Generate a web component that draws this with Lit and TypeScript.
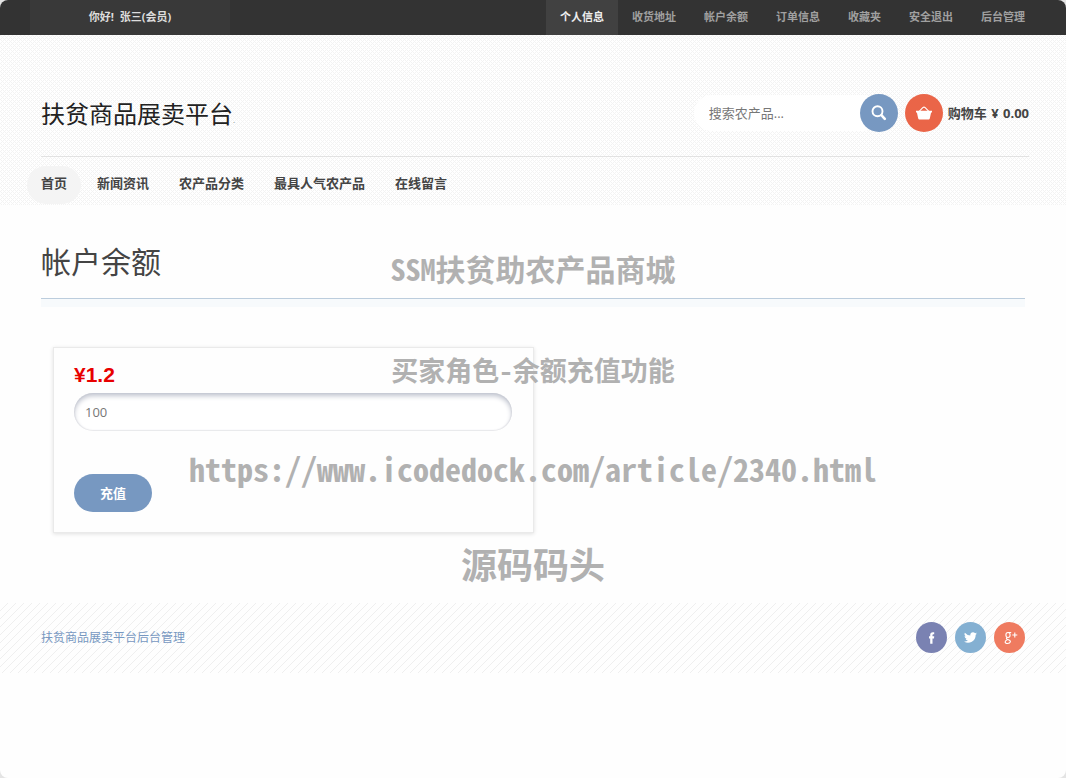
import { LitElement, html, css, svg } from "lit";
import { customElement, state } from "lit/decorators.js";

const accountLinks = ["个人信息", "收货地址", "帐户余额", "订单信息", "收藏夹", "安全退出", "后台管理"];
const mainLinks = ["首页", "新闻资讯", "农产品分类", "最具人气农产品", "在线留言"];

const searchIcon = svg`<svg viewBox="0 0 16 16" width="16" height="16" aria-hidden="true">
  <circle cx="6.5" cy="6.3" r="5" fill="none" stroke="#fff" stroke-width="1.9"/>
  <path d="M10.400 10.200l3.400 3.600" stroke="#fff" stroke-width="2.600" stroke-linecap="round"/></svg>`;

const basketIcon = svg`<svg viewBox="0 0 16 14" width="16" height="14" aria-hidden="true">
  <path d="M3.200 5.400L6.800 1.600Q8 .7 9.200 1.600L12.800 5.400" fill="none" stroke="#fff" stroke-width="1.1"/>
  <path d="M0 4.800h16v1.700h-.9L13.900 12c-.2 1-.8 1.500-1.700 1.500H3.800c-.9 0-1.500-.5-1.700-1.500L.9 6.500H0z" fill="#fff"/></svg>`;

const facebookIcon = svg`<svg viewBox="0 0 16 16" width="16" height="16" aria-hidden="true">
  <path d="M6.200 13.700V8.500H5V6.300h1.200V4.900c0-1.800 1-2.700 2.600-2.700h1.400v2.100h-.9c-.6 0-.8.3-.8.8v1.200h1.700L10 8.500H8.500v5.200z" fill="#fff"/></svg>`;

const twitterIcon = svg`<svg viewBox="0 0 24 24" width="13" height="13" aria-hidden="true">
  <path fill="#fff" d="M24 4.600a10 10 0 0 1-2.800.8 5 5 0 0 0 2.100-2.700 10 10 0 0 1-3.100 1.200 4.900 4.900 0 0 0-8.400 4.500A14 14 0 0 1 1.700 3.200a4.900 4.900 0 0 0 1.500 6.500 5 5 0 0 1-2.200-.6 4.900 4.900 0 0 0 3.900 4.900 5 5 0 0 1-2.200.1 4.900 4.900 0 0 0 4.600 3.400A9.900 9.900 0 0 1 0 19.500a14 14 0 0 0 21.500-12.400A10 10 0 0 0 24 4.600z"/></svg>`;

const googleIcon = svg`<svg viewBox="0 0 16 16" width="16" height="16" aria-hidden="true">
  <g fill="none" stroke="#fff" stroke-width="1.100">
  <ellipse cx="6" cy="5" rx="2.100" ry="2.500"/>
  <path d="M9.200 2.500H6M5 7.400C3.600 8.600 4.800 9.200 6.400 9.700c3.200 1 2.200 3.800-.8 3.800-3.200 0-3.300-2.800-.2-3.800"/>
  <path d="M12.800 2.500v5M10.300 5h5"/></g></svg>`;

@customElement("app-root")
export class AppRoot extends LitElement {
  @state() private activeAccount = 0;

  static styles = css`
    :host {
      display: block;
      min-height: 100vh;
      background: #e4e4e4;
      color: #444;
      font: 13px/20px "Open Sans", "Noto Sans CJK SC", sans-serif;
    }
    * { box-sizing: border-box; }
    a { color: inherit; text-decoration: none; }
    svg { display: block; }
    .page {
      position: relative;
      min-height: 100vh;
      background: #fefefe;
      border-radius: 8px;
      overflow: hidden;
    }
    .topbar {
      display: flex;
      justify-content: space-between;
      padding: 0 27px 0 30px;
      background: #333;
      color: #a0a0a0;
      font-size: 11px;
      font-weight: bold;
      line-height: 33px;
    }
    .greeting { width: 200px; padding-bottom: 2px; background: #393939; color: #ddd; text-align: center; }
    .account { display: flex; }
    .account a { padding: 0 14px 2px; }
    .account .active { background: #414141; color: #eee; }
    .header {
      height: 170px;
      padding: 0 37px 0 41px;
      background: #fff url('data:image/svg+xml,<svg xmlns="http://www.w3.org/2000/svg" width="4" height="4" shape-rendering="crispEdges"><path d="M0 0h1v1H0zM1 1h1v1H1zM2 2h1v1H2zM3 3h1v1H3zM3 1h1v1H3zM1 3h1v1H1z" fill="rgb(243,243,243)"/></svg>');
    }
    .brandrow {
      display: flex;
      justify-content: space-between;
      align-items: center;
      height: 122px;
      padding-top: 34px;
      border-bottom: 1px solid #e2e2e2;
    }
    .brand { padding-top: 8px; font-size: 24px; line-height: 36px; color: #222; }
    .brand small { font-size: 8px; color: #888; }
    .tools { display: flex; align-items: center; }
    .search { display: flex; align-items: center; margin-right: 7px; }
    .search input {
      width: 186px;
      height: 36px;
      margin-right: -20px;
      padding: 0 15px;
      border: 0;
      border-radius: 18px;
      background: #fff;
      color: #777;
      font: inherit;
    }
    .search input::placeholder { color: #777; opacity: 1; }
    .round {
      display: grid;
      place-items: center;
      width: 38px;
      height: 38px;
      padding: 0;
      border: 0;
      border-radius: 50%;
      background: #7798c1;
    }
    .cart { display: flex; align-items: center; gap: 5px; font-weight: bold; }
    .cart .round { background: #ea6548; }
    .yen { padding: 0 1px; }
    .menu { display: flex; gap: 2px; margin-left: -14px; padding-top: 9px; font-weight: bold; line-height: 34px; }
    .menu a { padding: 0 14px 4px; border-radius: 19px; }
    .menu .current { background: #f4f4f4; }
    .content { padding: 37px 41px 70px; }
    h1 {
      margin: 0;
      padding-bottom: 16px;
      border-bottom: 1px solid #bccddd;
      box-shadow: 0 8px #f7fafc;
      font-size: 30px;
      font-weight: 400;
      line-height: 40px;
    }
    .card {
      width: 481px;
      max-width: 100%;
      margin: 48px 0 0 12px;
      padding: 14px 21px 20px 20px;
      border: 1px solid #eaeaea;
      background: #fefefe;
      box-shadow: 0 1px 4px rgba(0, 0, 0, 0.12);
    }
    .balance { margin: 0; color: #e80000; font: bold 21px/26px "Liberation Sans", sans-serif; }
    .amount {
      display: block;
      width: 100%;
      height: 38px;
      margin-top: 5px;
      padding: 0 11px;
      border: 0;
      border-radius: 19px;
      background: #fff;
      box-shadow: inset 0 3px 5px #c0c4cf, inset 0 0 1px 1px #ececee;
      color: #777;
      font: inherit;
    }
    .submit {
      height: 38px;
      margin-top: 43px;
      padding: 0 26px;
      border: 0;
      border-radius: 19px;
      background: #7798c1;
      color: #fff;
      font: inherit;
      font-weight: bold;
    }
    .footer {
      display: flex;
      justify-content: space-between;
      height: 70px;
      padding: 19px 41px 0;
      background: url('data:image/svg+xml,<svg xmlns="http://www.w3.org/2000/svg" width="8" height="8" shape-rendering="crispEdges"><path d="M7 0h1v1H7zM6 1h1v1H6zM5 2h1v1H5zM4 3h1v1H4zM3 4h1v1H3zM2 5h1v1H2zM1 6h1v1H1zM0 7h1v1H0z" fill="rgb(239,239,239)"/></svg>');
      color: #7798c1;
      font-size: 12px;
      line-height: 32px;
    }
    .social { display: flex; gap: 8px; }
    .social a { display: grid; place-items: center; width: 31px; height: 31px; border-radius: 50%; }
    .facebook { background: #7a82b2; }
    .twitter { background: #84b0d2; }
    .google { background: #ef7b60; }
    .watermark {
      position: absolute;
      inset: 248px 0 auto;
      color: #b1b1b1;
      font-family: "Noto Sans Mono CJK SC", "Noto Sans CJK SC", monospace;
      font-weight: bold;
      text-align: center;
      pointer-events: none;
    }
    .watermark p { margin: 0; }
    .line-a { font-size: 30px; line-height: 40px; }
    .line-b { padding-top: 62px; font-size: 27px; line-height: 40px; }
    .line-c { padding-top: 58px; font-size: 32px; line-height: 40px; }
    .line-d { padding-top: 50px; font-size: 36px; line-height: 50px; }
  `;

  render() {
    return html`
      <div class="page">
        <div class="topbar">
          <div class="greeting">你好!&nbsp; 张三(会员)</div>
          <nav class="account" aria-label="帐户">
            ${accountLinks.map((label, i) => html`<a href="#" class=${i === this.activeAccount ? "active" : ""}
              @click=${() => { this.activeAccount = i; }}>${label}</a>`)}
          </nav>
        </div>
        <header class="header">
          <div class="brandrow">
            <a class="brand" href="#">扶贫商品展卖平台<small>.</small></a>
            <div class="tools">
              <form class="search" @submit=${(e: Event) => e.preventDefault()}>
                <input type="text" placeholder="搜索农产品..." aria-label="搜索农产品">
                <button class="round" aria-label="搜索">${searchIcon}</button>
              </form>
              <a class="cart" href="#"><span class="round">${basketIcon}</span><span>购物车 <span class="yen">¥</span> 0.00</span></a>
            </div>
          </div>
          <nav class="menu" aria-label="主菜单">
            ${mainLinks.map((label, i) => html`<a href="#" class=${i === 0 ? "current" : ""}>${label}</a>`)}
          </nav>
        </header>
        <main class="content">
          <h1>帐户余额</h1>
          <form class="card" @submit=${(e: Event) => e.preventDefault()}>
            <p class="balance">¥1.2</p>
            <input class="amount" type="text" value="100" aria-label="充值金额">
            <button class="submit">充值</button>
          </form>
        </main>
        <footer class="footer">
          <a href="#">扶贫商品展卖平台后台管理</a>
          <div class="social">
            <a class="facebook" href="#" aria-label="Facebook">${facebookIcon}</a>
            <a class="twitter" href="#" aria-label="Twitter">${twitterIcon}</a>
            <a class="google" href="#" aria-label="Google+">${googleIcon}</a>
          </div>
        </footer>
        <div class="watermark">
          <p class="line-a">SSM扶贫助农产品商城</p>
          <p class="line-b">买家角色-余额充值功能</p>
          <p class="line-c">https://www.icodedock.com/article/2340.html</p>
          <p class="line-d">源码码头</p>
        </div>
      </div>
    `;
  }
}
